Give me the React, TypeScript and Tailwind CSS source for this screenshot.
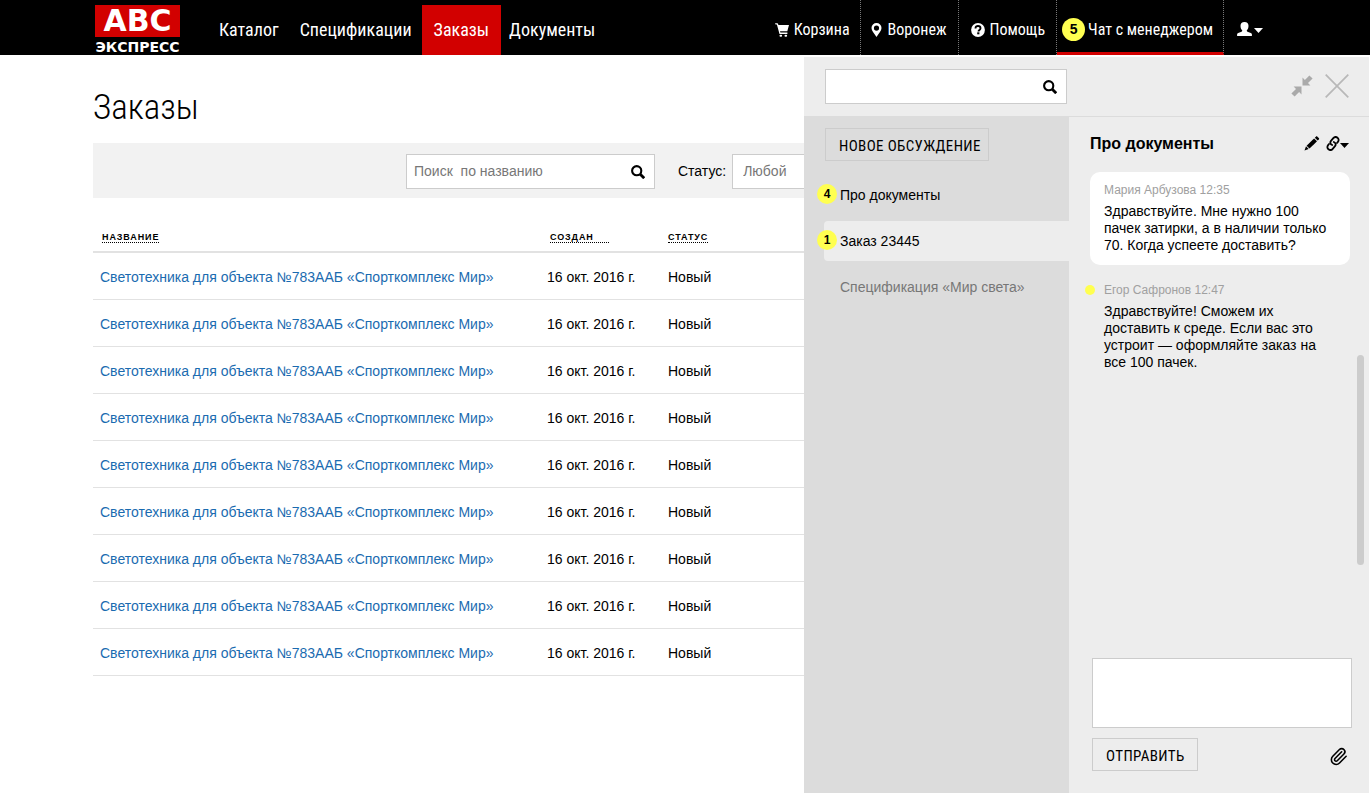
import React, { useState } from 'react';
import clsx from 'clsx';
import { Paperclip } from 'lucide-react';

const navItems = ['Каталог', 'Спецификации', 'Заказы', 'Документы'];

const orders = Array.from({ length: 9 }, (_, i) => ({
  id: i + 1,
  name: 'Светотехника для объекта №783ААБ «Спорткомплекс Мир»',
  created: '16 окт. 2016 г.',
  status: 'Новый',
}));

const threads = [
  { id: 1, title: 'Про документы', unread: 4 },
  { id: 2, title: 'Заказ 23445', unread: 1, active: true },
  { id: 3, title: 'Спецификация «Мир света»', unread: 0, muted: true },
];

const messages = [
  { id: 1, author: 'Мария Арбузова', time: '12:35', own: true, text: 'Здравствуйте. Мне нужно 100 пачек затирки, а в наличии только 70. Когда успеете доставить?' },
  { id: 2, author: 'Егор Сафронов', time: '12:47', own: false, text: 'Здравствуйте! Сможем их доставить к среде. Если вас это устроит — оформляйте заказ на все 100 пачек.' },
];

// -- ICONS --

const SearchIcon = () => (
  <svg width="14" height="14" viewBox="0 0 14 14" fill="none" stroke="#000">
    <circle cx="5.7" cy="5.7" r="4.6" strokeWidth="2.1" />
    <path d="M9 9l4.2 4.2" strokeWidth="2.8" />
  </svg>
);

const CartIcon = () => (
  <svg width="14" height="14" viewBox="0 0 14 14" fill="currentColor">
    <path d="M0 .3h2.300c.4 0 .6.2.7.5l.4 1.300H14L12.300 8.300H5l.4 1.300h7V11H4.500L1.900 1.600H.5z" />
    <rect x="4.500" y="11.800" width="2.600" height="2" rx="1" />
    <rect x="9.500" y="11.800" width="2.600" height="2" rx="1" />
  </svg>
);

const MarkerIcon = () => (
  <svg width="11" height="14" viewBox="0 0 11 14" fill="currentColor" fillRule="evenodd">
    <path d="M5.5 0a5 5 0 0 1 5 5c0 2.700-2.400 5.200-5 9C2.900 10.200.5 7.700.5 5a5 5 0 0 1 5-5zm0 2.500a2.600 2.600 0 1 0 0 5.200 2.600 2.600 0 0 0 0-5.200z" />
  </svg>
);

const HelpIcon = () => (
  <svg width="14" height="14" viewBox="0 0 14 14">
    <circle cx="7" cy="7" r="6.9" fill="currentColor" />
    <path d="M4.500 5.400C4.500 3.700 5.500 3 7 3s2.500.9 2.500 2.200c0 1.700-2 1.700-2 3.200" fill="none" stroke="#000" strokeWidth="1.900" />
    <path d="M6.200 9.300h2.200v2H6.200z" fill="#000" />
  </svg>
);

const UserIcon = () => (
  <svg width="15" height="14" viewBox="0 0 15 14" fill="currentColor">
    <path d="M7.500 0C10.200 0 11.500 1.500 11.500 3.800c0 2-.6 3.500-1.700 4.500v.5c0 .5.200.7.700.9l3.300 1.200c.7.300 1 .7 1.100 1.400V14H.1v-1.700c.1-.7.4-1.100 1.100-1.400l3.300-1.200c.5-.2.700-.4.700-.9v-.5c-1.100-1-1.700-2.500-1.700-4.500C3.500 1.500 4.800 0 7.500 0z" />
  </svg>
);

const CaretIcon = () => (
  <svg width="9" height="5" viewBox="0 0 9 5" fill="currentColor">
    <path d="M0 0h9L4.500 5z" />
  </svg>
);

const CollapseIcon = () => (
  <svg width="22" height="22" viewBox="0 0 22 22" fill="#aaa">
    <path d="M11.500 10.500V2.600l2.400 2.400L18.400.4l3.200 3.200-4.600 4.500 2.400 2.400z" />
    <path d="M10.500 11.500H2.600l2.400 2.400-4.600 4.500 3.200 3.200 4.500-4.600 2.400 2.400z" />
  </svg>
);

const CloseIcon = () => (
  <svg width="24" height="24" viewBox="0 0 24 24" fill="none" stroke="#b8b8b8" strokeWidth="1.700">
    <path d="M.7.7l22.600 22.600M23.300.7L.7 23.300" />
  </svg>
);

const PencilIcon = () => (
  <svg width="16" height="15" viewBox="0 0 16 15" fill="currentColor">
    <path d="M.5 14.500l1.500-4.200 2.700 2.700zM2.600 9.700l7.500-7.300 2.900 2.900-7.500 7.300zM10.800 1.700l1.100-1c.5-.5 1-.5 1.500 0l1.400 1.400c.5.500.5 1 0 1.500l-1.100 1z" />
  </svg>
);

const LinkIcon = () => (
  <svg width="14" height="15" viewBox="0 0 14 15" fill="none" stroke="currentColor" strokeWidth="1.800" strokeLinecap="round">
    <path d="M6.200 9C4.300 8.200 3.800 6.300 5 4.900l2.300-2.700c1.100-1.300 2.900-1.500 4.200-.5s1.500 2.900.4 4.200l-.9 1.100" />
    <path d="M7.800 6c1.900.8 2.400 2.700 1.200 4.100l-2.300 2.700c-1.100 1.300-2.900 1.500-4.200.5S1 10.400 2.100 9.100L3 8" />
  </svg>
);

// -- HEADER --

const Logo = () => (
  <a href="#" className="mt-[5px] flex w-[85px] shrink-0 flex-col items-center font-['DejaVu_Sans'] font-bold text-white">
    <span className="block h-8 w-full bg-[#d20000] text-center text-[30px] leading-8">ABC</span>
    <span className="block text-[14px] leading-[20px]">ЭКСПРЕСС</span>
  </a>
);

const toolLink = 'flex items-center border-r border-dotted border-[#777] whitespace-nowrap';

const Header = () => (
  <header className="flex h-[55px] bg-black pr-[107px] pl-[95px] font-['Roboto_Condensed',Roboto,sans-serif] text-white">
    <Logo />
    <nav className="ml-7 flex pt-[5px] text-[18px]">
      {navItems.map((item) => (
        <a
          key={item}
          href="#"
          className={clsx(
            'flex items-center pb-[2px]',
            item === 'Заказы' ? 'bg-[#d20000] px-3' : item === 'Документы' ? 'px-2' : 'pr-[10px] pl-[11px]'
          )}
        >
          {item}
        </a>
      ))}
    </nav>
    <div className="ml-auto flex text-[16px]">
      <a href="#" className={clsx(toolLink, 'gap-[5px] pt-1 pr-[10px]')}><CartIcon /> Корзина</a>
      <a href="#" className={clsx(toolLink, 'gap-[6px] pt-1 pr-[11px] pl-[10px]')}><MarkerIcon /> Воронеж</a>
      <a href="#" className={clsx(toolLink, 'gap-[5px] pt-1 pr-[11px] pl-3')}><HelpIcon /> Помощь</a>
      <a href="#" className={clsx(toolLink, 'gap-[3px] border-b-[3px] [border-bottom-color:#d20000] [border-bottom-style:solid] pt-[7px] pr-[10px] pl-[5px]')}>
        <span className="flex size-[23px] items-center justify-center rounded-full bg-[#ffff50] font-['Liberation_Sans'] text-[14px] font-bold text-black">5</span>
        Чат с менеджером
      </a>
      <button className="flex items-center gap-[2px] pt-[2px] pl-[13px]" aria-label="Профиль">
        <UserIcon />
        <span className="pt-1"><CaretIcon /></span>
      </button>
    </div>
  </header>
);

// -- ORDERS PAGE --

const OrdersPage = () => {
  const [search, setSearch] = useState('');

  return (
    <main className="px-[93px] pb-8">
      <h1 className="pt-[31px] font-['Roboto_Condensed',Roboto,sans-serif] text-[35px] leading-[44px] font-light">Заказы</h1>

      <form className="mt-[13px] flex h-[55px] items-center bg-[#f2f2f2] pt-[2px] pl-[313px]" onSubmit={(e) => e.preventDefault()}>
        <div className="flex h-[35px] w-[249px] shrink-0 items-center border border-[#ccc] bg-white pr-[9px]">
          <input
            aria-label="Поиск по названию"
            placeholder="Поиск&nbsp; по названию"
            className="min-w-0 flex-1 pl-[7px] outline-none placeholder:text-[#777]"
            value={search}
            onChange={(e) => setSearch(e.target.value)}
          />
          <button aria-label="Найти"><SearchIcon /></button>
        </div>
        <label htmlFor="status" className="ml-[23px]">Статус:</label>
        <select id="status" className="ml-[6px] h-[35px] w-[200px] appearance-none border border-[#ccc] bg-white pl-[10px] text-[#777]">
          <option>Любой</option>
          <option>Новый</option>
        </select>
      </form>

      <table className="mt-6 w-full table-fixed border-collapse text-left">
        <thead>
          <tr className="h-[30px] border-b-2 border-[#e2e2e2] text-[9px] leading-[10px] tracking-widest uppercase">
            <th className="w-[457px] pt-[2px] pl-[9px]"><span className="inline-block border-b border-dotted border-black">Название</span></th>
            <th className="w-[118px] pt-[2px]"><span className="inline-block w-[59px] border-b border-dotted border-black">Создан</span></th>
            <th className="pt-[2px]"><span className="inline-block border-b border-dotted border-black">Статус</span></th>
          </tr>
        </thead>
        <tbody>
          {orders.map((order) => (
            <tr key={order.id} className="h-[47px] border-b border-[#e2e2e2]">
              <td className="pt-[3px] pl-[7px] whitespace-nowrap"><a href="#" className="text-[#1a6bb0]">{order.name}</a></td>
              <td className="pt-[3px]"><span className="-ml-[3px]">{order.created}</span></td>
              <td className="pt-[3px]">{order.status}</td>
            </tr>
          ))}
        </tbody>
      </table>
    </main>
  );
};

// -- CHAT --

const boxButton = "h-[33px] border border-[#ccc] pt-[3px] pl-[13px] font-['Roboto_Condensed',Roboto,sans-serif] text-[15px] tracking-wide uppercase whitespace-nowrap";

const ChatPanel = () => {
  const [draft, setDraft] = useState('');

  return (
    <aside className="fixed top-[57px] right-px bottom-0 flex w-[565px] flex-col bg-[#ededed]">
      <div className="flex h-[60px] shrink-0 items-center border-b border-[#dcdcdc] pr-5 pl-[21px]">
        <div className="flex h-[35px] w-[242px] items-center border border-[#ccc] bg-white pr-[9px]">
          <input aria-label="Поиск по обсуждениям" className="min-w-0 flex-1 pl-2 outline-none" />
          <button aria-label="Найти"><SearchIcon /></button>
        </div>
        <button className="ml-auto pb-[2px]" aria-label="Свернуть"><CollapseIcon /></button>
        <button className="ml-3 pb-[2px]" aria-label="Закрыть"><CloseIcon /></button>
      </div>

      <div className="flex min-h-0 flex-1">
        <div className="w-[265px] shrink-0 bg-[#dcdcdc] pt-[11px]">
          <button className={clsx(boxButton, 'ml-[21px] pr-[7px]')}>Новое обсуждение</button>
          <ul className="mt-[14px] flex flex-col gap-[6px] pl-5">
            {threads.map((thread) => (
              <li key={thread.id} className={clsx('relative flex h-10 items-center rounded-l', thread.active && 'bg-[#ededed]')}>
                {thread.unread > 0 && (
                  <span className="absolute top-[9px] -left-[7px] flex size-5 items-center justify-center rounded-full bg-[#ffff50] text-[12px] font-bold">
                    {thread.unread}
                  </span>
                )}
                <a href="#" className={clsx('pl-4', thread.muted && 'text-[#777]')}>{thread.title}</a>
              </li>
            ))}
          </ul>
        </div>

        <section className="relative flex min-w-0 flex-1 flex-col pr-[17px] pl-[21px]">
          <div className="flex h-[55px] items-center pr-[3px] pb-[2px]">
            <h2 className="text-[16px] font-bold">Про документы</h2>
            <button className="ml-auto" aria-label="Переименовать"><PencilIcon /></button>
            <button className="ml-[6px] flex items-center" aria-label="Ссылка">
              <LinkIcon />
              <span className="pt-1"><CaretIcon /></span>
            </button>
          </div>

          <div className="flex flex-1 flex-col gap-[7px] pr-[2px]">
            {messages.map((message) => (
              <article key={message.id} className={clsx('relative rounded-[10px] px-[14px] pt-[9px] pb-[11px]', message.own && 'bg-white')}>
                {!message.own && <span className="absolute top-[13px] -left-[5px] size-[10px] rounded-full bg-[#ffff50]" />}
                <p className="text-[12px] leading-[18px] text-[#a0a0a0]">{message.author} {message.time}</p>
                <p className="mt-1 leading-[17px]">{message.text}</p>
              </article>
            ))}
          </div>

          <form className="pb-[22px] pl-[2px]" onSubmit={(e) => e.preventDefault()}>
            <textarea
              aria-label="Сообщение"
              className="block h-[70px] w-full resize-none border border-[#ccc] bg-white p-2 outline-none"
              value={draft}
              onChange={(e) => setDraft(e.target.value)}
            />
            <div className="mt-[10px] flex items-center justify-between pr-1">
              <button className={clsx(boxButton, 'pr-3')}>Отправить</button>
              <button type="button" aria-label="Прикрепить файл" className="pt-[3px]"><Paperclip size={19} strokeWidth={2} /></button>
            </div>
          </form>

          {/* Scrollbar thumb */}
          <div className="absolute top-[238px] right-[5px] h-[210px] w-[7px] rounded-full bg-[#ccc]" />
        </section>
      </div>
    </aside>
  );
};

const App = () => (
  <div className="min-h-screen bg-white font-['Liberation_Sans',Arial,sans-serif] text-[14px] text-black">
    <Header />
    <OrdersPage />
    <ChatPanel />
  </div>
);

export default App;
